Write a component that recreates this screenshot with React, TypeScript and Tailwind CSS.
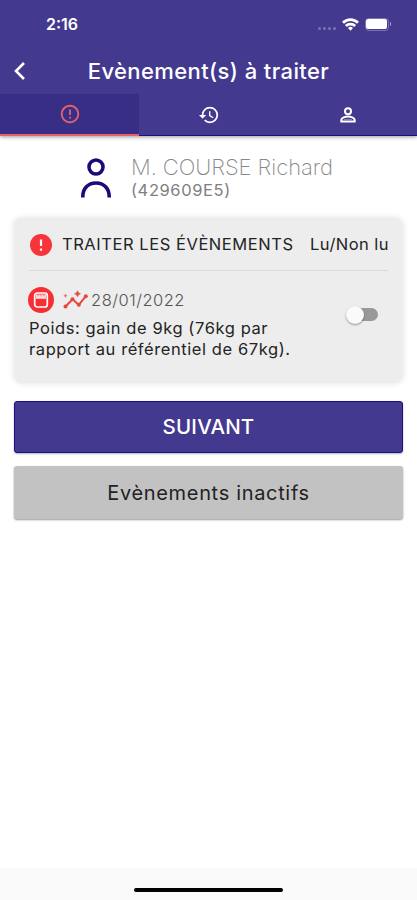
import { MdErrorOutline, MdHistory } from "react-icons/md";

function StatusBar() {
  return (
    <div className="flex h-[48px] items-center justify-between pl-[46px] pr-[26px]">
      <span className="text-[16px] font-semibold leading-none">2:16</span>
      <div className="flex items-center">
        <div className="mr-[6px] mt-[8px] flex gap-[2px]">
          <i className="size-[3px] rounded-full bg-white/30" />
          <i className="size-[3px] rounded-full bg-white/30" />
          <i className="size-[3px] rounded-full bg-white/30" />
          <i className="size-[3px] rounded-full bg-white/30" />
        </div>
        <svg className="mr-[6px] h-[13px] w-[17px]" viewBox="0 0 17 13" fill="none" stroke="white" strokeWidth="2.8">
          <path d="M1 4.8a10.6 10.6 0 0 1 15 0" />
          <path d="M3.9 8a6.5 6.5 0 0 1 9.2 0" />
          <path d="M8.5 12.800 6 10a3.7 3.7 0 0 1 5 0z" fill="white" stroke="none" />
        </svg>
        <div className="mr-px flex h-[13px] w-[24px] items-center justify-center rounded-[4px] border border-white/30">
          <div className="h-[10px] w-[21px] rounded-[2px] bg-white" />
        </div>
        <div className="h-[4px] w-[1.5px] rounded-r bg-white/50" />
      </div>
    </div>
  );
}

function Header() {
  return (
    <header className="flex h-[136px] shrink-0 flex-col bg-[#43398e] text-white shadow-[0_1px_4px_rgba(0,0,0,0.4)]">
      <StatusBar />
      <div className="grid h-[46px] grid-cols-[40px_1fr_40px] items-center">
        <svg className="ml-[12px] size-[18px]" viewBox="0 0 18 18" fill="none" stroke="white" strokeWidth="2.6">
          <path d="M12 1 4 9l8 8" />
        </svg>
        <h1 className="whitespace-nowrap text-center text-[22px] font-medium leading-none tracking-[0.4px]">
          Evènement(s) à traiter
        </h1>
      </div>
      <nav className="grid h-[42px] grid-cols-3 border-b-[1px] border-[#1c0f85]">
        <div className="-mb-px flex items-center justify-center border-b-2 border-[#e2616d] bg-[#382e85] text-[#e2616d]">
          <MdErrorOutline size={22} />
        </div>
        <div className="flex items-center justify-center">
          <MdHistory size={22} />
        </div>
        <div className="flex items-center justify-center">
          <svg className="size-[18px]" viewBox="0 0 18 18" fill="none" stroke="white" strokeWidth="2">
            <circle cx="9" cy="5.200" r="3" />
            <path d="M2.300 15.500v-1.500c0-2.200 4.400-3.500 6.700-3.500s6.700 1.300 6.700 3.500v1.500z" />
            <path d="M5 13.500h8" strokeWidth="1" strokeOpacity="0.35" />
          </svg>
        </div>
      </nav>
    </header>
  );
}

function Patient() {
  return (
    <section className="flex h-[82px] shrink-0 pl-[80px] pt-[19px]">
      <svg className="mt-[1px] h-[42px] w-[32px]" viewBox="0 0 32 42" fill="none" stroke="#1a0a7c" strokeWidth="3.6">
        <circle cx="16" cy="11" r="7" />
        <path d="M2.800 41.500v-1C2.800 32.500 8 27 16 27s13.200 5.500 13.200 13.500v1" />
      </svg>
      <div className="ml-[19px] whitespace-nowrap">
        <p className="text-[22px] font-extralight leading-[24px] tracking-[-0.05px] text-[#888]">M. COURSE Richard</p>
        <p className="text-[16.5px] leading-[23px] tracking-[0.6px] text-[#808080]">(429609E5)</p>
      </div>
    </section>
  );
}

function EventCard() {
  return (
    <section className="mx-[14px] h-[165px] shrink-0 rounded-[8px] bg-[#ededed] px-[15px] shadow-[0_0_6px_rgba(0,0,0,0.12)]">
      <div className="flex h-[53px] items-center whitespace-nowrap border-b border-[#d9d9d9] pt-px text-[16.5px] text-[#242424]">
        <svg className="ml-[1px] mr-[10px] size-[22px]" viewBox="0 0 22 22">
          <circle cx="11" cy="11" r="11" fill="#f73439" />
          <path d="M11 5.500v6.500M11 14.500v2.200" stroke="#fff" strokeWidth="2.200" />
        </svg>
        <span className="tracking-[0.55px]">TRAITER LES ÉVÈNEMENTS</span>
        <span className="-mr-[1px] ml-auto tracking-[0.45px]">Lu/Non lu</span>
      </div>
      <div className="flex justify-between pt-[16px]">
        <div>
          <div className="flex h-[26px] items-center">
            <svg className="-ml-[1px] size-[26px]" viewBox="0 0 26 26">
              <circle cx="13" cy="13" r="13" fill="#f62f35" />
              <rect x="6.700" y="6" width="12.600" height="14" rx="2.500" fill="none" stroke="#fff" strokeWidth="1.700" />
              <path d="M8 7.500h10v4.300H8z" fill="#fff" fillOpacity="0.85" />
              <path d="M9.300 8.800h1.800M12.100 8.800h1.800M14.900 8.800h1.800" stroke="#f62f35" strokeOpacity="0.5" />
            </svg>
            <svg className="ml-[8px] h-[20px] w-[26px]" viewBox="0 0 26 20" fill="#e8453f">
              <path d="m3.500 16.500 7-7.200 6.300 5.500 7-8.600" fill="none" stroke="#e8453f" strokeWidth="2" />
              <circle cx="3.500" cy="16.500" r="2" />
              <circle cx="10.500" cy="9.300" r="2" />
              <circle cx="16.800" cy="14.800" r="2" />
              <circle cx="23.800" cy="6.200" r="2" />
              <path d="m15.500.800 1 2 2 1-2 1-1 2-1-2-2-1 2-1z" stroke="#e8453f" strokeWidth="0.500" />
              <path d="m3.500 3.500.700 1.500 1.500.700-1.500.700-.700 1.500-.700-1.500-1.500-.700 1.500-.700z" fillOpacity="0.700" />
            </svg>
            <span className="ml-[3px] mt-px text-[16.5px] font-light tracking-[0.5px] text-[#555]">28/01/2022</span>
          </div>
          <p className="mt-[5px] whitespace-nowrap text-[16.5px] leading-[21px] tracking-[0.58px] text-[#242424]">
            Poids: gain de 9kg (76kg par
            <br />
            rapport au référentiel de 67kg).
          </p>
        </div>
        <div className="mr-[10px] mt-[21px] flex h-[13px] w-[30px] items-center rounded-full bg-[#999]">
          <div className="-ml-[2px] size-[18px] rounded-full bg-[#fafafa] shadow-[0_1px_2px_rgba(0,0,0,0.4)]" />
        </div>
      </div>
    </section>
  );
}

export default function App() {
  return (
    <main className="flex h-[900px] w-[417px] flex-col overflow-hidden bg-white font-['Inter','Liberation_Sans',sans-serif]">
      <Header />
      <Patient />
      <EventCard />
      <button className="mx-[14px] mt-[18px] h-[52px] shrink-0 rounded-[3px] border border-[#1c0f85] bg-[#43398e] text-[20.5px] font-medium tracking-[0.2px] text-white shadow-[0_1px_2px_rgba(0,0,0,0.3)]">
        SUIVANT
      </button>
      <button className="mx-[14px] mt-[13px] h-[53px] shrink-0 rounded-[3px] bg-[#c2c2c2] text-[20px] tracking-[0.67px] text-[#222] shadow-[0_1px_2px_rgba(0,0,0,0.4)]">
        Evènements inactifs
      </button>
      <footer className="mt-auto flex h-[32px] justify-center bg-[#fafafa] pt-[20px]">
        <div className="h-[4px] w-[149px] rounded-full bg-black" />
      </footer>
    </main>
  );
}
